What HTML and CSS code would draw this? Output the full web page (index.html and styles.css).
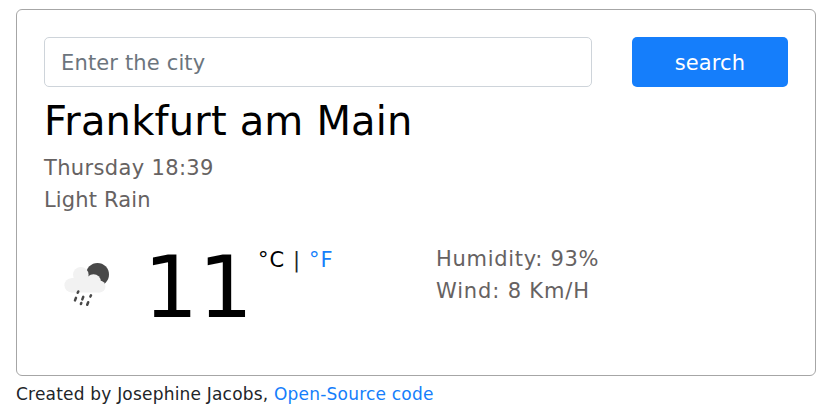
FILE: index.html
```html
<!DOCTYPE html>
<html lang="en">
<head>
<meta charset="utf-8">
<title>Weather</title>
<link rel="stylesheet" href="styles.css">
</head>
<body>
<main class="card">
  <form class="search">
    <input class="city-input" type="text" placeholder="Enter the city">
    <button class="search-button" type="button">search</button>
  </form>
  <h1 class="city">Frankfurt am Main</h1>
  <ul class="details">
    <li class="date">Thursday 18:39</li>
    <li class="description">Light Rain</li>
  </ul>
  <div class="weather">
    <div class="current">
      <svg class="icon" viewBox="62 260 50 50" width="50" height="50">
        <circle cx="97.500" cy="274.500" r="11.500" fill="#484848"/>
        <g fill="#f2f2f2">
          <circle cx="80.800" cy="274.800" r="7.800"/>
          <circle cx="71.500" cy="285.300" r="7.100"/>
          <circle cx="93.500" cy="281.500" r="7.300"/>
          <circle cx="99.500" cy="286.500" r="6"/>
          <path d="M71.500 278h17l11 6v8.500h-28z"/>
        </g>
        <path d="M78.300 291.500l-.6 1.300M76 297.800l-1 2.600M83.300 296.800l-1 2.600M91 295.300l-.6 1.300M81.300 303l-.4 1M88.200 302.200l-1 2.600" stroke="#484848" stroke-width="2.500" stroke-linecap="round" fill="none"/>
      </svg>
      <strong class="temp">11</strong>
      <span class="units"><span class="celsius">°C</span><span class="divider">|</span><a href="#">°F</a></span>
    </div>
    <ul class="details">
      <li class="humidity">Humidity: 93%</li>
      <li class="wind">Wind: 8 Km/H</li>
    </ul>
  </div>
</main>
<footer class="footer">Created by Josephine Jacobs, <a href="#">Open-Source code</a></footer>
</body>
</html>
```
FILE: styles.css
```css
* { box-sizing: border-box; }
body { margin: 0; padding: 9px 15px 0 16px; background: #fff; font-family: "DejaVu Sans", Verdana, sans-serif; color: #212529; }
a { color: #157efb; text-decoration: none; }
.card { height: 367px; border: 1px solid #a6a6a6; border-radius: 6px; padding: 27px; }
.search { display: flex; gap: 40px; height: 50px; }
.city-input { width: 548px; border: 1px solid #ced4da; border-radius: 5px; padding: 2px 16px 0; font: 21px "DejaVu Sans", sans-serif; letter-spacing: .15px; }
.city-input::placeholder { color: #6c757d; opacity: 1; }
.search-button { flex: 1; border: 0; border-radius: 5px; padding: 2px 0 0; background: #157efb; color: #fff; font: 21px "DejaVu Sans", sans-serif; letter-spacing: .1px; }
.city { margin: 9px 0 6px; font-size: 40px; line-height: 50px; font-weight: 400; color: #000; white-space: nowrap; letter-spacing: .18px; }
.details { margin: 0; padding: 0; list-style: none; font-size: 21px; line-height: 32px; color: #666262; }
.date { letter-spacing: .35px; }
.description { letter-spacing: .15px; }
.humidity { letter-spacing: .7px; }
.wind { letter-spacing: .85px; }
.weather { display: flex; margin-top: 27px; }
.current { display: flex; width: 392px; }
.icon { margin: 17px 0 0 18px; }
.temp { margin-left: 31.500px; font-size: 86px; line-height: 88px; font-weight: 400; color: #000; }
.units { display: flex; margin-left: 5px; font-size: 21px; line-height: 34px; letter-spacing: 1px; color: #000; }
.celsius { width: 35px; }
.divider { width: 16px; color: #212529; }
.footer { font-size: 17px; line-height: 24px; margin-top: 6px; letter-spacing: .2px; }
```
